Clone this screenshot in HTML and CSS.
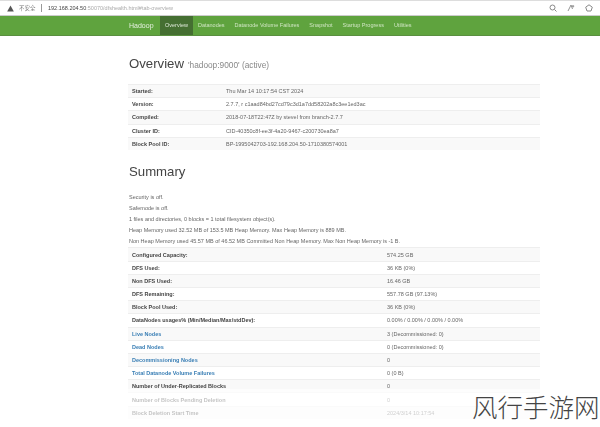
FILE: index.html
```html
<!DOCTYPE html>
<html lang="en-us">

<head>
<meta charset="utf-8">
<title>Namenode information</title>
<link rel="stylesheet" href="styles.css">
</head>

<body>

<div class="addressBar">
    <svg class="warnIcon" width="7" height="7" viewBox="0 0 8 8"><path d="M4 .5 7.8 7.5H.2Z" fill="#555"/></svg>
    <span class="insecure">不安全</span>
    <span class="divider"></span>
    <span class="url"><b>192.168.204.50</b>:50070/dfshealth.html#tab-overview</span>
    <svg class="barIcon" width="8" height="8" viewBox="0 0 8 8"><circle cx="3.5" cy="3.5" r="2.5" fill="none" stroke="#888"/><path d="M5.5 5.5 7.5 7.5" stroke="#888"/></svg>
    <svg class="barIcon" width="8" height="8" viewBox="0 0 8 8"><path d="M1 7 4 1 5.5 5M6 1V3.5M4.8 2.2H7.2" fill="none" stroke="#888" stroke-width=".9"/></svg>
    <svg class="barIcon" width="8" height="8" viewBox="0 0 8 8"><path d="M4 .8 7.3 3.2 6 7H2L.7 3.2Z" fill="none" stroke="#888"/></svg>
</div>

<nav class="navbar">
    <span class="brand">Hadoop</span>
    <a class="navItem active">Overview</a>
    <a class="navItem">Datanodes</a>
    <a class="navItem">Datanode Volume Failures</a>
    <a class="navItem">Snapshot</a>
    <a class="navItem">Startup Progress</a>
    <a class="navItem">Utilities</a>
</nav>

<main class="container">
    <div class="pageHeader">
        <h1>Overview</h1>
        <small>'hadoop:9000' (active)</small>
    </div>

    <table class="infoTable">
        <tr><th>Started:</th><td>Thu Mar 14 10:17:54 CST 2024</td></tr>
        <tr><th>Version:</th><td>2.7.7, r c1aad84bd27cd79c3d1a7dd58202a8c3ee1ed3ac</td></tr>
        <tr><th>Compiled:</th><td>2018-07-18T22:47Z by stevel from branch-2.7.7</td></tr>
        <tr><th>Cluster ID:</th><td>CID-40350c8f-ee3f-4a20-9467-c200730ea8a7</td></tr>
        <tr><th>Block Pool ID:</th><td>BP-1995042703-192.168.204.50-1710380574001</td></tr>
    </table>

    <h2>Summary</h2>

    <p>Security is off.</p>
    <p>Safemode is off.</p>
    <p>1 files and directories, 0 blocks = 1 total filesystem object(s).</p>
    <p>Heap Memory used 32.52 MB of 153.5 MB Heap Memory. Max Heap Memory is 889 MB.</p>
    <p>Non Heap Memory used 45.57 MB of 46.52 MB Committed Non Heap Memory. Max Non Heap Memory is -1 B.</p>

    <table class="summaryTable">
        <tr><th>Configured Capacity:</th><td>574.25 GB</td></tr>
        <tr><th>DFS Used:</th><td>36 KB (0%)</td></tr>
        <tr><th>Non DFS Used:</th><td>16.46 GB</td></tr>
        <tr><th>DFS Remaining:</th><td>557.78 GB (97.13%)</td></tr>
        <tr><th>Block Pool Used:</th><td>36 KB (0%)</td></tr>
        <tr><th>DataNodes usages% (Min/Median/Max/stdDev):</th><td>0.00% / 0.00% / 0.00% / 0.00%</td></tr>
        <tr><th><a>Live Nodes</a></th><td>3 (Decommissioned: 0)</td></tr>
        <tr><th><a>Dead Nodes</a></th><td>0 (Decommissioned: 0)</td></tr>
        <tr><th><a>Decommissioning Nodes</a></th><td>0</td></tr>
        <tr><th><a>Total Datanode Volume Failures</a></th><td>0 (0 B)</td></tr>
        <tr><th>Number of Under-Replicated Blocks</th><td>0</td></tr>
        <tr><th>Number of Blocks Pending Deletion</th><td>0</td></tr>
        <tr><th>Block Deletion Start Time</th><td>2024/3/14 10:17:54</td></tr>
    </table>
</main>

<div class="bottomFade"></div>
<div class="watermark">风行手游网</div>

</body>

</html>
```

FILE: styles.css
```css
html, body {
    height: 427px;
    overflow: hidden;
}
body {
    margin: 0;
    background-color: #fff;
    font-family: "Liberation Sans", Arial, sans-serif;
    font-size: 5.5px;
    color: #555;
    position: relative;
}

/* browser chrome */
.addressBar {
    display: flex;
    align-items: center;
    height: 14px;
    padding: 0 7px;
    border-top: 1px solid #ddd;
    border-bottom: 1px solid #ccc;
    filter: blur(.35px);
}
.warnIcon {
    margin-right: 5px;
}
.insecure {
    font-family: "Liberation Sans", "Noto Sans CJK SC", sans-serif;
    color: #777;
    width: 17px;
    white-space: nowrap;
}
.divider {
    width: 1px;
    height: 8px;
    background-color: #999;
    margin: 0 6px 0 5px;
}
.url {
    color: #aaa;
    flex: 1;
}
.url b {
    color: #444;
    font-weight: normal;
}
.barIcon {
    margin-left: 10px;
}

/* green nav */
.navbar {
    display: flex;
    align-items: center;
    height: 19px;
    padding-left: 129px;
    background-color: #5fa33e;
    border-bottom: 1px solid #5a8f40;
    filter: blur(.35px);
}
.brand {
    color: #e6f0e0;
    font-size: 7px;
    width: 31px;
}
.navItem {
    display: block;
    line-height: 19px;
    color: #cfe5c2;
    padding: 0 5px;
}
.navItem.active {
    background-color: #456f32;
    color: #dfe9da;
}

.container {
    width: 412px;
    margin-left: 128px;
    filter: blur(.35px);
}

.pageHeader {
    display: flex;
    align-items: baseline;
    gap: 4px;
    margin-top: 19px;
    margin-bottom: 11px;
    padding-left: 1px;
}
h1 {
    font-weight: normal;
    font-size: 13.2px;
    line-height: 18px;
    margin: 0;
    color: #444;
}
small {
    font-size: 8.3px;
    color: #888;
}
h2 {
    font-weight: normal;
    font-size: 13.2px;
    line-height: 18px;
    color: #444;
    margin: 13px 0 11px 1px;
}
p {
    margin: 0 0 0 1px;
    line-height: 10.8px;
    color: #666;
}

table {
    width: 100%;
    border-collapse: collapse;
    table-layout: fixed;
}
th, td {
    height: 13.2px;
    padding: 0 0 0 4px;
    text-align: left;
    border-top: 1px solid #eee;
    box-sizing: border-box;
    color: #666;
}
th {
    font-weight: bold;
    color: #444;
}
tr:nth-child(odd) th, tr:nth-child(odd) td {
    background-color: #f9f9f9;
}
.infoTable th {
    width: 94px;
}
.summaryTable {
    margin-top: 1px;
}
.summaryTable th {
    width: 255px;
}
.summaryTable a {
    color: #3a7fb5;
}

.bottomFade {
    position: absolute;
    left: 0;
    right: 0;
    top: 389px;
    bottom: 0;
    background-color: rgba(255,255,255,.68);
}
.watermark {
    position: absolute;
    left: 472px;
    top: 392px;
    font-family: "Noto Sans CJK SC", sans-serif;
    font-weight: 300;
    font-size: 25.5px;
    line-height: 28px;
    color: #444;
    white-space: nowrap;
}
```
